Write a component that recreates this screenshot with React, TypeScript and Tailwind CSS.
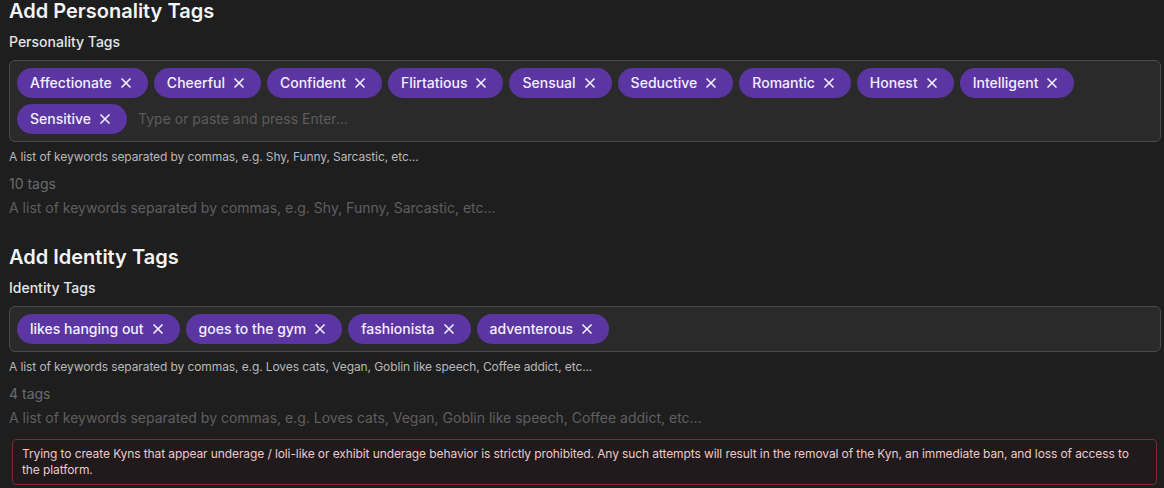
import { X } from 'lucide-react';

const personalityTags = [
  'Affectionate',
  'Cheerful',
  'Confident',
  'Flirtatious',
  'Sensual',
  'Seductive',
  'Romantic',
  'Honest',
  'Intelligent',
  'Sensitive',
];

const identityTags = ['likes hanging out', 'goes to the gym', 'fashionista', 'adventerous'];

const Tag = ({ label }: { label: string }) => (
  <span className="flex h-[30px] items-center gap-1.5 rounded-full bg-[#5b36a2] pl-[13px] pr-[14px] text-sm font-medium text-[#f3efff]">
    {label}
    <X size={16} strokeWidth={2.5} className="text-[#f3efff]" />
  </span>
);

interface TagSectionProps {
  title: string;
  label: string;
  tags: string[];
  hint: string;
  placeholder?: boolean;
}

const TagSection = ({ title, label, tags, hint, placeholder }: TagSectionProps) => (
  <div className="flex flex-col">
    <h2 className="text-xl font-semibold leading-5 text-[#f4f4f4]">{title}</h2>
    <label className="mt-[11px] text-sm font-medium leading-5 text-[#e6e6e6]">{label}</label>

    {/* Tag input */}
    <div className="mt-2 flex flex-wrap items-center gap-x-1.5 gap-y-1.5 rounded-md border border-[#4b4b4b] bg-[#2a2a2a] p-[7px]">
      {tags.map((t) => (
        <Tag key={t} label={t} />
      ))}
      {placeholder && (
        <span className="ml-[5px] text-sm leading-5 text-[#5c5c5c]">Type or paste and press Enter...</span>
      )}
    </div>

    <p className="mt-[7px] text-xs leading-4 tracking-[-0.1px] text-[#b8b8b8]">{hint}</p>
    <p className="mt-[9px] text-sm leading-5 text-[#6b6b6b]">{tags.length} tags</p>
    <p className="mt-1 text-sm leading-5 text-[#5f5f5f]">{hint}</p>
  </div>
);

export default function App() {
  return (
    <div
      className="min-h-[488px] bg-[#1e1e1f] pl-[9px] pr-[3px] pt-px"
      style={{ fontFamily: 'Inter, "Noto Sans", sans-serif' }}
    >
      <TagSection
        title="Add Personality Tags"
        label="Personality Tags"
        tags={personalityTags}
        hint="A list of keywords separated by commas, e.g. Shy, Funny, Sarcastic, etc..."
        placeholder
      />
      <div className="mt-[29px]">
        <TagSection
          title="Add Identity Tags"
          label="Identity Tags"
          tags={identityTags}
          hint="A list of keywords separated by commas, e.g. Loves cats, Vegan, Goblin like speech, Coffee addict, etc..."
        />
      </div>

      {/* Warning */}
      <div className="ml-[3px] mr-[4px] mt-[11px] rounded border border-[#7c2a36] bg-[#201a1c] px-[9px] py-1.5 text-xs leading-4 tracking-[-0.1px] text-[#ecc9cb]">
        Trying to create Kyns that appear underage / loli-like or exhibit underage behavior is strictly prohibited. Any
        such attempts will result in the removal of the Kyn, an immediate ban, and loss of access to the platform.
      </div>
    </div>
  );
}
